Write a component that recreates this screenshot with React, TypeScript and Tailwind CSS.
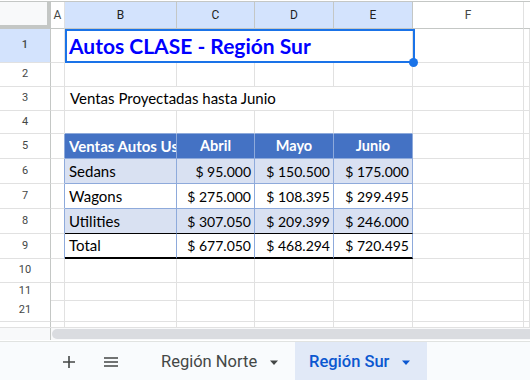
import React from "react";

const ui = { fontFamily: "Roboto, 'Liberation Sans', sans-serif" };
const cell = { fontFamily: "Lato, 'Open Sans', sans-serif" };

const GRID = "grid grid-cols-[51px_14px_112px_78px_79px_79px_111px_6px]";

type R = {
  n: string;
  h: string;
  sel?: boolean;
};

const RowHead = ({ n, sel }: { n: string; sel?: boolean }) => (
  <div
    className={`flex items-center justify-center border-r border-b border-r-[#c4c7c5] border-b-[#e1e1e1] text-[11px] text-[#444746] ${
      sel ? "bg-[#d3e3fd] font-medium text-[#0b57d0]" : "bg-white"
    }`}
    style={ui}
  >
    {n}
  </div>
);

const Blank = ({ cls = "" }: { cls?: string }) => (
  <div className={`border-r border-b border-[#e1e1e1] ${cls}`} />
);

const data = [
  { name: "Sedans", v: ["$ 95.000", "$ 150.500", "$ 175.000"], band: true },
  { name: "Wagons", v: ["$ 275.000", "$ 108.395", "$ 299.495"], band: false },
  { name: "Utilities", v: ["$ 307.050", "$ 209.399", "$ 246.000"], band: true },
];

export default function App() {
  return (
    <div className="w-[530px] h-[380px] overflow-hidden bg-white flex flex-col">
      {/* grid */}
      <div className="h-[327px] overflow-hidden">
        {/* column headers */}
        <div className={`${GRID} h-[28px] border-t border-[#c4c7c5] mt-[1px]`} style={ui}>
          <div className="bg-[#f8f9fa] border-r-4 border-b-4 border-[#c4c7c5]" />
          <div className="flex items-center justify-center border-r border-b border-r-[#e1e1e1] border-b-[#c4c7c5] text-[12px] text-[#444746]">
            A
          </div>
          {["B", "C", "D", "E"].map((c) => (
            <div
              key={c}
              className="flex items-center justify-center bg-[#d3e3fd] border-r border-b border-r-[#c4c7c5] border-b-[#c4c7c5] text-[12px] text-[#1f1f1f]"
            >
              {c}
            </div>
          ))}
          <div className="flex items-center justify-center border-r border-b border-r-[#e1e1e1] border-b-[#c4c7c5] text-[12px] text-[#444746]">
            F
          </div>
          <div className="border-b border-[#c4c7c5]" />
        </div>

        {/* row 1 */}
        <div className={`${GRID} h-[34px]`}>
          <RowHead n="1" sel />
          <Blank />
          <div className="col-span-4 relative flex items-center pl-[4px] border-r border-b border-[#e1e1e1]">
            <span
              className="text-[21px] font-bold text-[#0000ff] whitespace-nowrap leading-none"
              style={cell}
            >
              Autos CLASE - Región Sur
            </span>
            <div className="absolute left-0 top-0 w-[350px] h-[34px] border-2 border-[#1a73e8]" />
            <div className="absolute left-[344px] top-[29px] w-[9px] h-[9px] rounded-full bg-[#1a73e8] z-10" />
          </div>
          <Blank />
          <Blank />
        </div>

        {/* row 2 */}
        <div className={`${GRID} h-[24px]`}>
          <RowHead n="2" />
          {Array.from({ length: 7 }).map((_, i) => (
            <Blank key={i} />
          ))}
        </div>

        {/* row 3 */}
        <div className={`${GRID} h-[24px]`}>
          <RowHead n="3" />
          <Blank />
          <div className="col-span-4 flex items-center pl-[5px] border-r border-b border-[#e1e1e1]">
            <span className="text-[15px] text-black whitespace-nowrap" style={cell}>
              Ventas Proyectadas hasta Junio
            </span>
          </div>
          <Blank />
          <Blank />
        </div>

        {/* row 4 */}
        <div className={`${GRID} h-[23px]`}>
          <RowHead n="4" />
          <Blank />
          {Array.from({ length: 4 }).map((_, i) => (
            <Blank key={i} cls="border-b-[#8eaadb]" />
          ))}
          <Blank />
          <Blank />
        </div>

        {/* row 5 header */}
        <div className={`${GRID} h-[25px]`} style={cell}>
          <RowHead n="5" />
          <div className="border-r border-b border-r-[#8eaadb] border-b-[#e1e1e1]" />
          <div className="flex items-center pl-[4px] min-w-0 overflow-hidden bg-[#4472c4] border-r border-b border-[#8eaadb] text-white font-bold text-[15px]">
            <span className="block w-full overflow-hidden whitespace-nowrap">Ventas Autos Usados</span>
          </div>
          {["Abril", "Mayo", "Junio"].map((m) => (
            <div
              key={m}
              className="flex items-center justify-center bg-[#4472c4] border-r border-b border-[#8eaadb] text-white font-bold text-[14.5px]"
            >
              {m}
            </div>
          ))}
          <Blank />
          <Blank />
        </div>

        {/* data rows */}
        {data.map((r, i) => (
          <div key={r.name} className={`${GRID} h-[25px]`} style={cell}>
            <RowHead n={String(6 + i)} />
            <div className="border-r border-b border-r-[#8eaadb] border-b-[#e1e1e1]" />
            <div
              className={`flex items-center pl-[4px] border-r border-b border-r-[#8eaadb] text-[15px] text-black ${
                i === 2 ? "border-b-black" : "border-b-[#8eaadb]"
              } ${r.band ? "bg-[#d9e1f2]" : "bg-white"}`}
            >
              {r.name}
            </div>
            {r.v.map((v) => (
              <div
                key={v}
                className={`flex items-center justify-end pr-[3px] border-r border-b border-r-[#8eaadb] text-[14px] text-black ${
                  i === 2 ? "border-b-black" : "border-b-[#8eaadb]"
                } ${r.band ? "bg-[#d9e1f2]" : "bg-white"}`}
              >
                {v}
              </div>
            ))}
            <Blank />
            <Blank />
          </div>
        ))}

        {/* row 9 total */}
        <div className={`${GRID} h-[25px]`} style={cell}>
          <RowHead n="9" />
          <div className="border-r border-b border-r-[#8eaadb] border-b-[#e1e1e1]" />
          <div className="flex items-center pl-[4px] border-r border-b-2 border-r-[#8eaadb] border-b-black text-[15px] text-black">
            Total
          </div>
          {["$ 677.050", "$ 468.294", "$ 720.495"].map((v) => (
            <div
              key={v}
              className="flex items-center justify-end pr-[3px] border-r border-b-2 border-r-[#8eaadb] border-b-black text-[14px] text-black"
            >
              {v}
            </div>
          ))}
          <Blank />
          <Blank />
        </div>

        {/* rows 10, 11, 21, partial */}
        {[
          { n: "10", h: "h-[24px]" },
          { n: "11", h: "h-[16px]" },
          { n: "21", h: "h-[23px]" },
          { n: "", h: "h-[6px]" },
        ].map((r: R) => (
          <div key={r.n + r.h} className={`${GRID} ${r.h}`}>
            <RowHead n={r.n} />
            {Array.from({ length: 7 }).map((_, i) => (
              <Blank key={i} />
            ))}
          </div>
        ))}
      </div>

      {/* horizontal scrollbar */}
      <div className="h-[13px] flex bg-[#f8f9fa] border-t border-[#e1e1e1]">
        <div className="w-[51px] border-r border-[#c4c7c5]" />
        <div className="flex-1 flex items-center pl-[1px]">
          <div className="w-full h-[10px] rounded-l-full bg-[#dadce0]" />
        </div>
      </div>

      {/* sheet tabs */}
      <div
        className="mt-[1px] h-[39px] flex items-stretch bg-[#f9fbfd] border-t border-[#e1e3e1]"
        style={ui}
      >
        <div className="w-[52px]" />
        <div className="w-[34px] flex items-center justify-center pt-[2px] text-[#444746]">
          <svg width="14" height="14" viewBox="0 0 14 14">
            <path d="M7 1v12M1 7h12" stroke="#444746" strokeWidth="1.6" />
          </svg>
        </div>
        <div className="w-[50px] flex items-center justify-center pt-[2px]">
          <svg width="16" height="12" viewBox="0 0 16 12">
            <path d="M1 2h14M1 6h14M1 10h14" stroke="#444746" strokeWidth="1.6" />
          </svg>
        </div>
        <div className="w-[159px] flex items-center pl-[25px] pt-[3px] gap-[12px] text-[16.5px] text-[#444746]">
          <span>Región Norte</span>
          <svg width="10" height="6" viewBox="0 0 10 6">
            <path d="M1 0.5h8L5 5z" fill="#444746" />
          </svg>
        </div>
        <div className="w-[132px] flex items-center pl-[14px] pt-[3px] gap-[12px] bg-[#e1e9f7] text-[16.5px] font-medium text-[#0b57d0]">
          <span>Región Sur</span>
          <svg width="10" height="6" viewBox="0 0 10 6">
            <path d="M1 0.5h8L5 5z" fill="#0b57d0" />
          </svg>
        </div>
      </div>
    </div>
  );
}
